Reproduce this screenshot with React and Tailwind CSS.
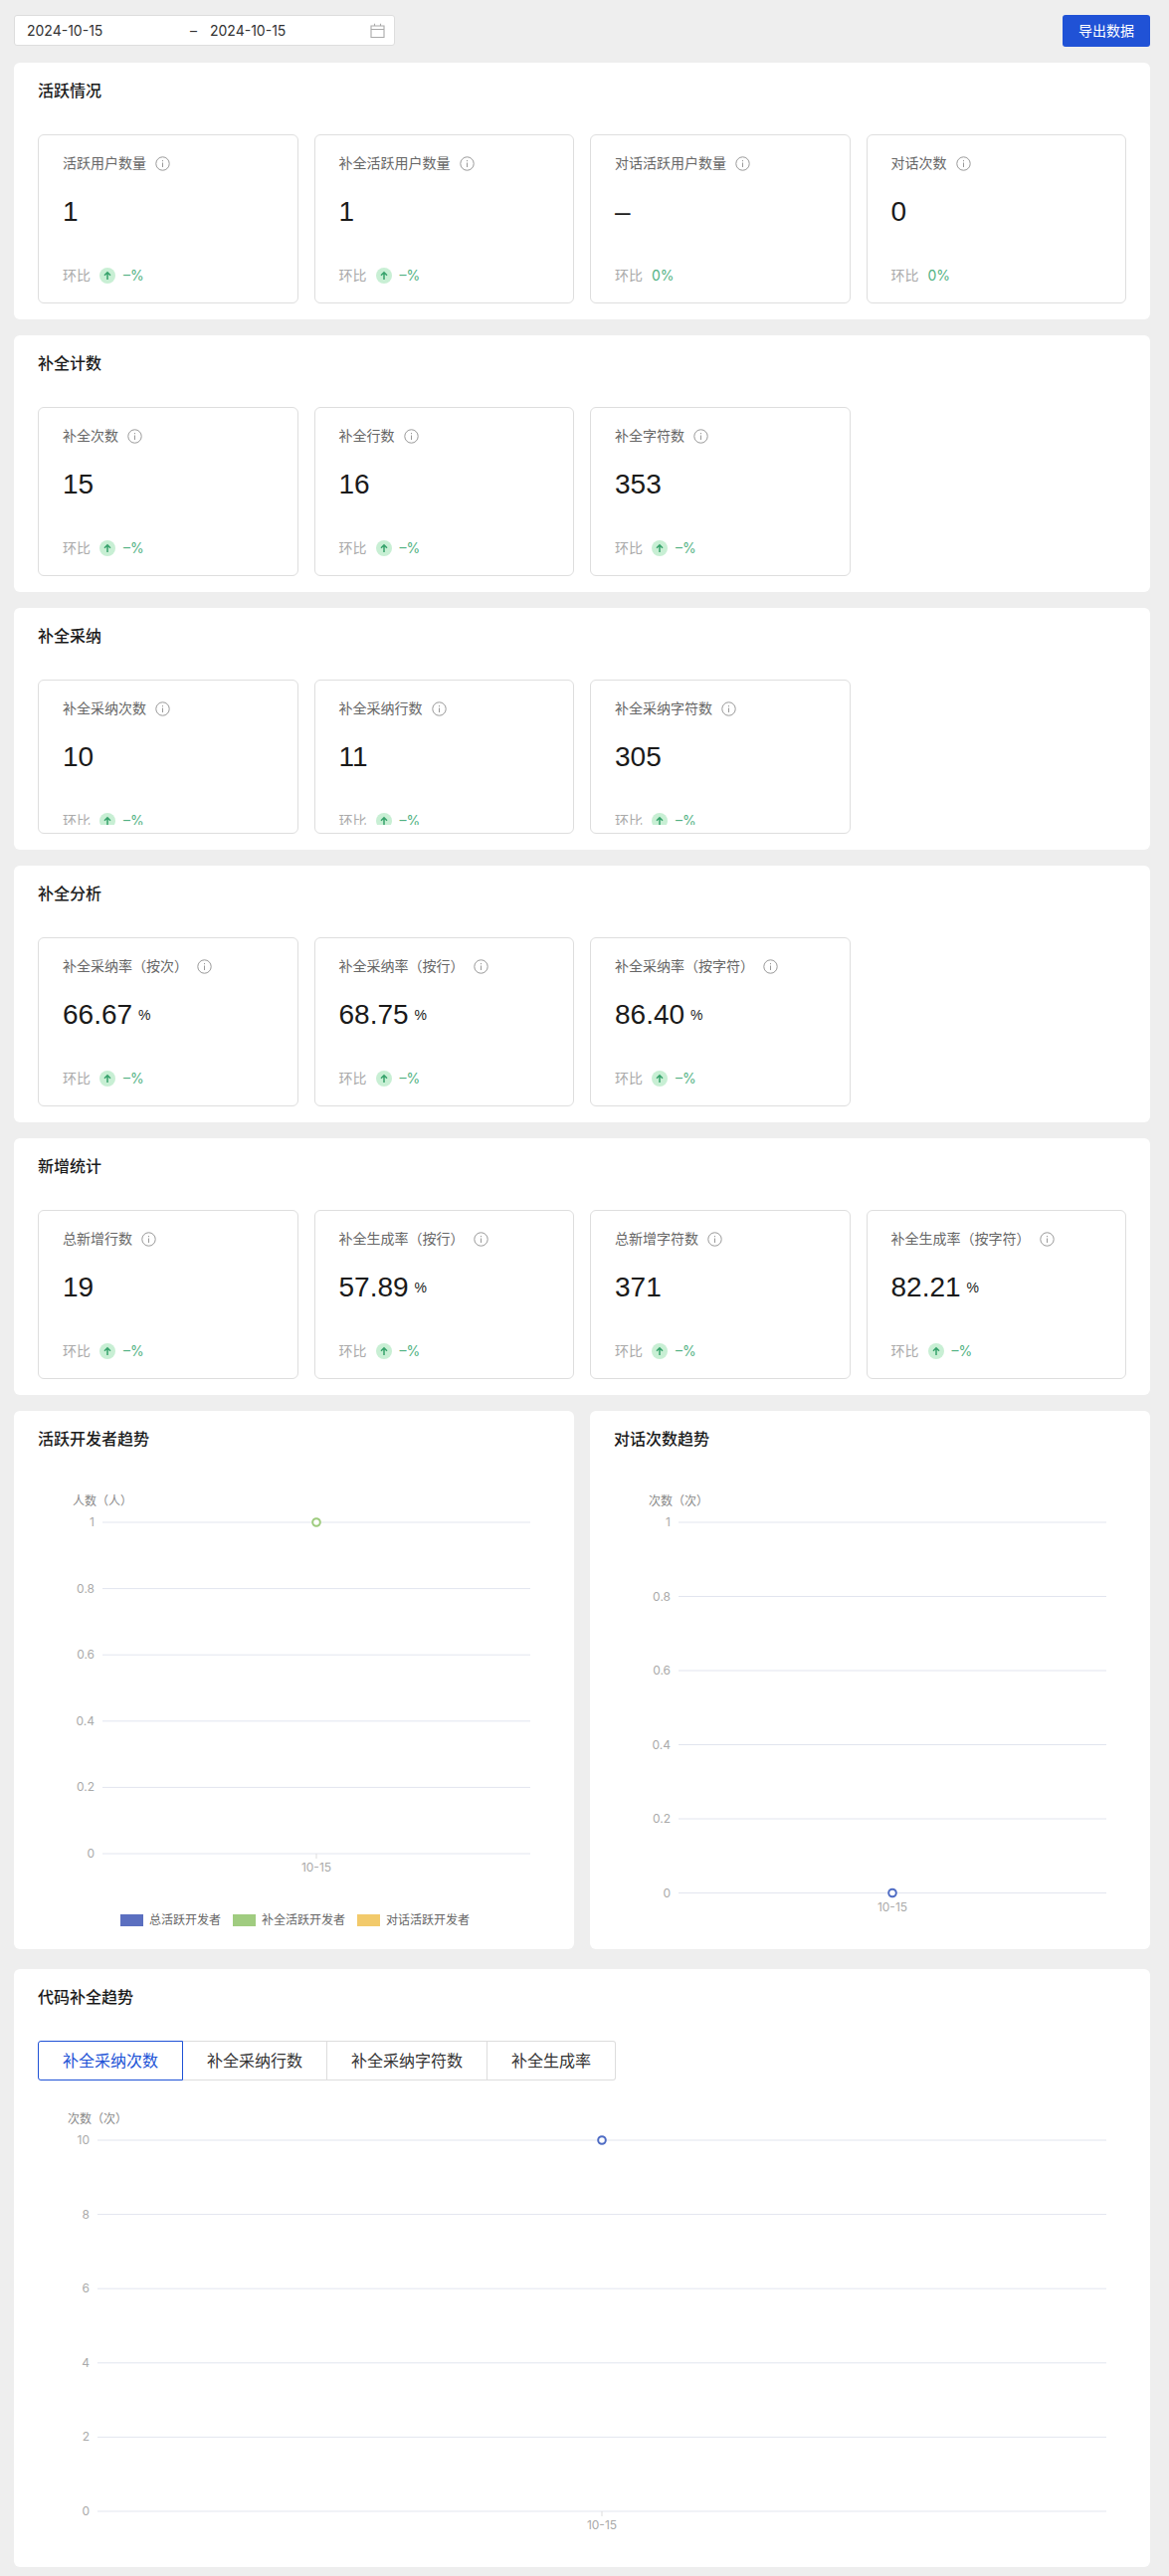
import React from 'react';

const SECTIONS = [
    {
        title: '活跃情况',
        items: [
            { label: '活跃用户数量', value: '1', trend: '–%', up: true },
            { label: '补全活跃用户数量', value: '1', trend: '–%', up: true },
            { label: '对话活跃用户数量', value: '–', trend: '0%' },
            { label: '对话次数', value: '0', trend: '0%' }
        ]
    },
    {
        title: '补全计数',
        items: [
            { label: '补全次数', value: '15', trend: '–%', up: true },
            { label: '补全行数', value: '16', trend: '–%', up: true },
            { label: '补全字符数', value: '353', trend: '–%', up: true }
        ]
    },
    {
        title: '补全采纳',
        short: true,
        items: [
            { label: '补全采纳次数', value: '10', trend: '–%', up: true },
            { label: '补全采纳行数', value: '11', trend: '–%', up: true },
            { label: '补全采纳字符数', value: '305', trend: '–%', up: true }
        ]
    },
    {
        title: '补全分析',
        items: [
            { label: '补全采纳率（按次）', value: '66.67', unit: '%', trend: '–%', up: true },
            { label: '补全采纳率（按行）', value: '68.75', unit: '%', trend: '–%', up: true },
            { label: '补全采纳率（按字符）', value: '86.40', unit: '%', trend: '–%', up: true }
        ]
    },
    {
        title: '新增统计',
        items: [
            { label: '总新增行数', value: '19', trend: '–%', up: true },
            { label: '补全生成率（按行）', value: '57.89', unit: '%', trend: '–%', up: true },
            { label: '总新增字符数', value: '371', trend: '–%', up: true },
            { label: '补全生成率（按字符）', value: '82.21', unit: '%', trend: '–%', up: true }
        ]
    }
];

const TABS = ['补全采纳次数', '补全采纳行数', '补全采纳字符数', '补全生成率'];

const InfoIcon = () => (
    <svg width="15" height="15" viewBox="0 0 15 15" fill="none" className="shrink-0">
        <circle cx="7.5" cy="7.5" r="6.7" stroke="#999" strokeWidth="1" />
        <rect x="7" y="6.5" width="1" height="4.5" fill="#999" />
        <rect x="7" y="4" width="1" height="1.2" fill="#999" />
    </svg>
);

const UpIcon = () => (
    <span className="flex h-4 w-4 items-center justify-center rounded-full bg-[#c8efd4]">
        <svg width="10" height="10" viewBox="0 0 10 10" fill="none">
            <path d="M5 9V2M2 4.8 5 1.8l3 3" stroke="#36a26b" strokeWidth="1.5" />
        </svg>
    </span>
);

const MetricCard = ({ item, short }) => (
    <div className={`rounded-md border border-[#dedede] bg-white ${short ? 'h-[155px] pb-2' : 'h-[170px]'}`}>
        <div className="h-full overflow-hidden px-6 pt-[17px]">
            <div className="flex h-[22px] items-center gap-[9px] text-sm leading-[22px] text-[#666]">
                <span>{item.label}</span>
                <InfoIcon />
            </div>
            <div className="mt-[18px] flex h-10 items-center font-['Liberation_Sans','Noto_Sans_CJK_SC',sans-serif] text-[#1a1a1a]">
                <span className="text-[28px] leading-10">{item.value}</span>
                {item.unit && <span className="ml-[6px] text-sm">{item.unit}</span>}
            </div>
            <div className="mt-[33px] flex h-[22px] items-center text-sm leading-[22px]">
                <span className="text-[#aaa]">环比</span>
                {item.up && <span className="ml-[9px]"><UpIcon /></span>}
                <span className={`text-[#52b283] ${item.up ? 'ml-[8px]' : 'ml-[9px]'}`}>{item.trend}</span>
            </div>
        </div>
    </div>
);

const Section = ({ section }) => (
    <div className="rounded-md bg-white px-6 pb-4">
        <h2 className="h-[72px] pt-[16px] text-base leading-6 font-medium text-[#1a1a1a]">{section.title}</h2>
        <div className="grid grid-cols-4 gap-4">
            {section.items.map((item) => <MetricCard key={item.label} item={item} short={section.short} />)}
        </div>
    </div>
);

const LineChart = ({ width, height, name, nameX, ticks, left, right, top, step, dot, dotColor, legend }) => {
    const cx = (left + right) / 2;
    const bottom = top + step * (ticks.length - 1);
    return (
        <svg width={width} height={height} className="block" fontSize="12">
            <text x={nameX} y={top - 17} fill="#888">{name}</text>
            {ticks.map((tick, i) => {
                const y = top + step * i;
                return (
                    <g key={tick}>
                        <line x1={left} x2={right} y1={y} y2={y} stroke="#e2e5ef" />
                        <text x={left - 8} y={y + 4} fill="#aaa" textAnchor="end">{tick}</text>
                    </g>
                );
            })}
            <line x1={cx} x2={cx} y1={bottom} y2={bottom + 5} stroke="#ddd" />
            <text x={cx} y={bottom + 18} fill="#aaa" textAnchor="middle">10-15</text>
            <circle cx={cx} cy={dot === 'top' ? top : bottom} r="3.8" fill="#fff" stroke={dotColor} strokeWidth="2" />
            {legend && legend.map((l) => (
                <g key={l.text}>
                    <rect x={l.x} y={434} width="23" height="12" fill={l.color} />
                    <text x={l.x + 29} y={444} fill="#666">{l.text}</text>
                </g>
            ))}
        </svg>
    );
};

const App = () => (
    <div className="min-h-[2589px] bg-[#eeeeee] pt-[15px] pr-[19px] pl-[14px] font-['Inter','Noto_Sans_CJK_SC',sans-serif]">
        <div className="mb-4 flex items-start justify-between">
            <div className="flex h-[31px] w-[383px] items-center rounded-[3px] border border-[#dddddd] bg-white pr-[9px] pl-3 text-sm text-[#333]">
                <span className="w-[164px]">2024-10-15</span>
                <span className="w-[20px]">–</span>
                <span className="flex-1">2024-10-15</span>
                <svg width="15" height="15" viewBox="0 0 15 15" fill="none">
                    <path d="M1 3h13v11.5H1zM1 6.5h13M4.5 .8V3M10.5 .8V3" stroke="#aaa" strokeWidth="1.1" />
                </svg>
            </div>
            <button className="h-8 w-[88px] rounded-[3px] bg-[#2052d6] text-sm text-white">导出数据</button>
        </div>

        <div className="flex flex-col gap-4">
            {SECTIONS.map((section) => <Section key={section.title} section={section} />)}

            <div className="grid grid-cols-2 gap-4">
                <div className="h-[541px] rounded-md bg-white">
                    <h2 className="h-[72px] px-6 pt-[16px] text-base leading-6 font-medium text-[#1a1a1a]">活跃开发者趋势</h2>
                    <LineChart
                        width={563}
                        height={469}
                        name="人数（人）"
                        nameX={59}
                        ticks={['1', '0.8', '0.6', '0.4', '0.2', '0']}
                        left={89}
                        right={519}
                        top={40}
                        step={66.6}
                        dot="top"
                        dotColor="#9dcb7d"
                        legend={[
                            { x: 107, color: '#5b6fc0', text: '总活跃开发者' },
                            { x: 220, color: '#a0cc80', text: '补全活跃开发者' },
                            { x: 345, color: '#f2ca6b', text: '对话活跃开发者' }
                        ]}
                    />
                </div>
                <div className="h-[541px] rounded-md bg-white">
                    <h2 className="h-[72px] px-6 pt-[16px] text-base leading-6 font-medium text-[#1a1a1a]">对话次数趋势</h2>
                    <LineChart
                        width={563}
                        height={469}
                        name="次数（次）"
                        nameX={59}
                        ticks={['1', '0.8', '0.6', '0.4', '0.2', '0']}
                        left={89}
                        right={519}
                        top={40}
                        step={74.5}
                        dot="bottom"
                        dotColor="#4f6cc4"
                    />
                </div>
            </div>

            <div className="mt-1 h-[601px] rounded-md bg-white">
                <h2 className="h-[72px] px-6 pt-[16px] text-base leading-6 font-medium text-[#1a1a1a]">代码补全趋势</h2>
                <div className="ml-6 flex h-10 w-fit text-base text-[#333]">
                    {TABS.map((tab, i) => (
                        <div
                            key={tab}
                            className={
                                i === 0
                                    ? 'flex items-center rounded-l-[3px] border border-[#2052d6] px-6 text-[#2052d6]'
                                    : `flex items-center border-y border-r border-[#dddddd] px-6 ${i === TABS.length - 1 ? 'rounded-r-[3px]' : ''}`
                            }
                        >
                            {tab}
                        </div>
                    ))}
                </div>
                <div className="mt-[9px]">
                    <LineChart
                        width={1142}
                        height={480}
                        name="次数（次）"
                        nameX={54}
                        ticks={['10', '8', '6', '4', '2', '0']}
                        left={84}
                        right={1098}
                        top={51}
                        step={74.6}
                        dot="top"
                        dotColor="#4f6cc4"
                    />
                </div>
            </div>
        </div>
    </div>
);

export default App;
